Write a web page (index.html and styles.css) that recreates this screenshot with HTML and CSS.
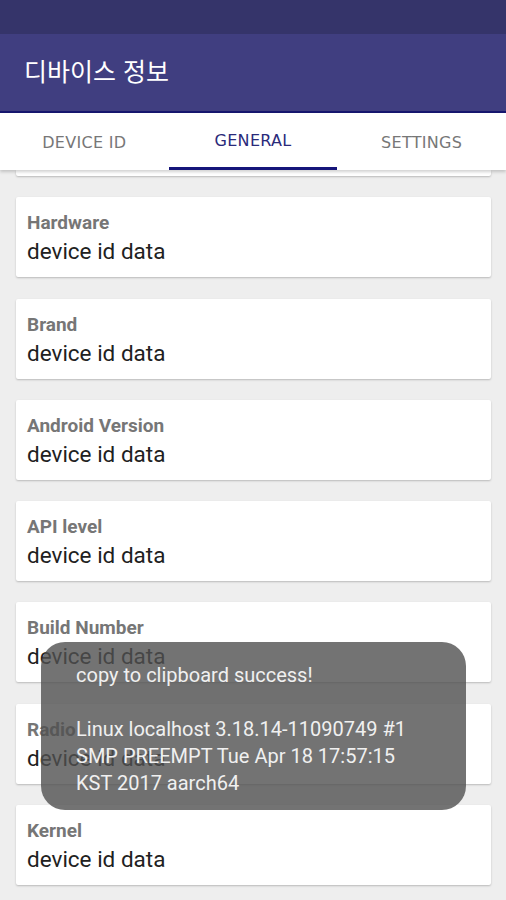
FILE: index.html
```html
<!DOCTYPE html>
<html lang="ko">
<head>
    <meta charset="utf-8">
    <title>디바이스 정보</title>
    <link rel="stylesheet" href="styles.css">
</head>
<body>
    <div class="status-bar"></div>
    <div class="app-bar">
        <h1 class="title">디바이스 정보</h1>
    </div>
    <div class="tabs">
        <div class="tab">DEVICE ID</div>
        <div class="tab active">GENERAL</div>
        <div class="tab">SETTINGS</div>
    </div>
    <div class="content">
        <div class="card cut"></div>
        <div class="card">
            <div class="label">Hardware</div>
            <div class="value">device id data</div>
        </div>
        <div class="card">
            <div class="label">Brand</div>
            <div class="value">device id data</div>
        </div>
        <div class="card">
            <div class="label">Android Version</div>
            <div class="value">device id data</div>
        </div>
        <div class="card">
            <div class="label">API level</div>
            <div class="value">device id data</div>
        </div>
        <div class="card">
            <div class="label">Build Number</div>
            <div class="value">device id data</div>
        </div>
        <div class="card">
            <div class="label">Radio</div>
            <div class="value">device id data</div>
        </div>
        <div class="card">
            <div class="label">Kernel</div>
            <div class="value">device id data</div>
        </div>
    </div>
    <div class="toast">
        copy to clipboard success!<br>
        <br>
        Linux localhost 3.18.14-11090749 #1<br>
        SMP PREEMPT Tue Apr 18 17:57:15<br>
        KST 2017 aarch64
    </div>
</body>
</html>
```

FILE: styles.css
```css
body {
    margin: 0;
    width: 506px;
    height: 900px;
    overflow: hidden;
    background-color: #eeeeee;
    font-family: Roboto, "Noto Sans", sans-serif;
    position: relative;
}
.status-bar {
    height: 34px;
    background-color: #35346a;
}
.app-bar {
    height: 77px;
    background-color: #403e80;
    border-bottom: 2px solid #17166e;
    display: flex;
    align-items: center;
    padding-left: 24px;
}
.title {
    margin: 0;
    color: #ffffff;
    font-family: "Noto Sans CJK KR", sans-serif;
    font-size: 25px;
    font-weight: 400;
    line-height: 30px;
    margin-top: -6px;
}
.tabs {
    display: flex;
    height: 57px;
    background-color: #ffffff;
    box-shadow: 0 2px 3px rgba(0, 0, 0, 0.18);
    position: relative;
    z-index: 1;
}
.tab {
    flex: 1;
    display: flex;
    align-items: center;
    justify-content: center;
    font-family: "DejaVu Sans", sans-serif;
    font-size: 16px;
    letter-spacing: 0.3px;
    color: #777777;
    box-sizing: border-box;
    padding-top: 1px;
}
.tab.active {
    color: #2a2a7a;
    border-bottom: 3px solid #16157a;
}
.content {
    display: flex;
    flex-direction: column;
    gap: 21.3px;
    padding: 0 15px 0 16px;
}
.card {
    background-color: #ffffff;
    height: 80px;
    box-sizing: border-box;
    padding: 13px 11px 0;
    border-radius: 2px;
    box-shadow: 0 1px 2px rgba(0, 0, 0, 0.22);
}
.card.cut {
    height: 6px;
    padding: 0;
    border-radius: 0 0 2px 2px;
}
.label {
    font-size: 19px;
    font-weight: 700;
    color: #767676;
    line-height: 25px;
}
.value {
    font-size: 22.5px;
    color: #212121;
    line-height: 33px;
}
.toast {
    position: absolute;
    left: 41px;
    top: 642px;
    width: 425px;
    height: 168px;
    box-sizing: border-box;
    padding: 20px 20px 0 35px;
    border-radius: 24px;
    background-color: rgba(80, 80, 80, 0.8);
    color: #f0f0f0;
    font-size: 20px;
    line-height: 27px;
    z-index: 2;
}
```
